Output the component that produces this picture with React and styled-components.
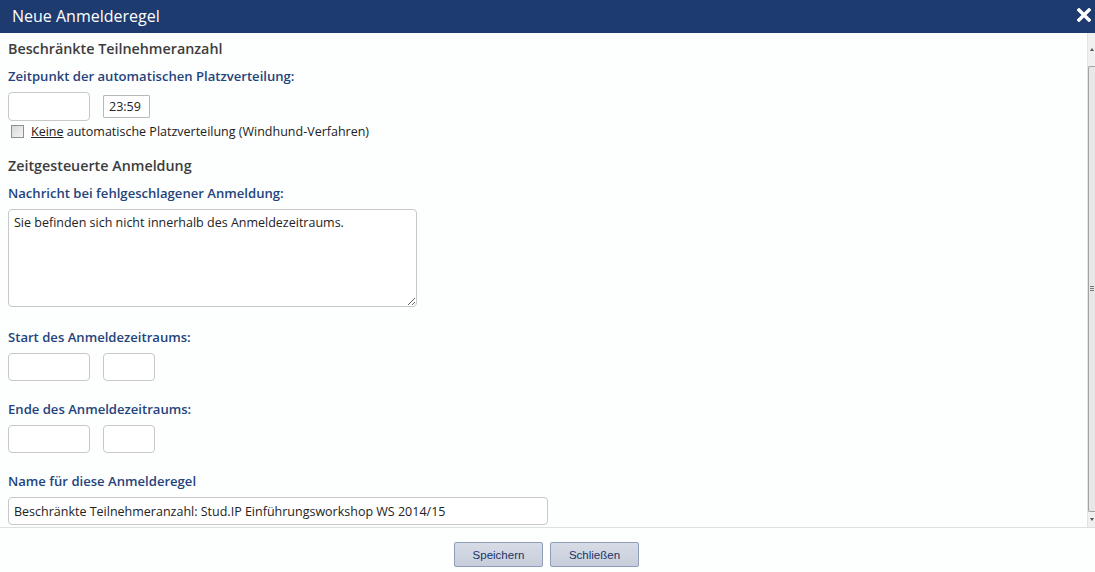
import React from "react";
import styled, { createGlobalStyle } from "styled-components";

const GlobalStyle = createGlobalStyle`
  html, body {
    margin: 0;
    padding: 0;
    background: #fdfefe;
  }
  body {
    font-family: "Open Sans", "Liberation Sans", sans-serif;
    color: #333;
  }
`;

const Dialog = styled.div`
  width: 1095px;
  height: 572px;
  display: flex;
  flex-direction: column;
  background: #fdfefe;
  overflow: hidden;
`;

const TitleBar = styled.div`
  height: 33px;
  flex: none;
  background: #1e3b6f;
  display: flex;
  align-items: center;
  justify-content: space-between;
  padding: 0 4px 0 12px;
`;

const Title = styled.span`
  color: #fff;
  font-size: 16px;
  line-height: 20px;
  margin-top: -2px;
`;

const CloseButton = styled.button`
  border: none;
  background: none;
  padding: 0;
  width: 14px;
  height: 14px;
  display: flex;
  margin-top: -4px;
  cursor: pointer;
`;

const Body = styled.div`
  flex: none;
  height: 494px;
  display: flex;
  border-bottom: 1px solid #dcdfe3;
`;

const Content = styled.div`
  flex: 1;
  padding: 6px 8px 0 8px;
  display: flex;
  flex-direction: column;
  align-items: flex-start;
`;

const Scrollbar = styled.div`
  width: 7px;
  flex: none;
  background: #f0f0f0;
  border-left: 1px solid #e2e2e2;
  display: flex;
  flex-direction: column;
  align-items: stretch;
`;

const Arrow = styled.div`
  height: ${p => (p.$down ? 15 : 33)}px;
  flex: none;
  display: flex;
  justify-content: center;
  align-items: center;
  &::before {
    content: "";
    width: 0;
    height: 0;
    border-left: 2px solid transparent;
    border-right: 2px solid transparent;
    ${p => (p.$down ? "border-top: 3px solid #555;" : "border-bottom: 3px solid #555;")}
  }
`;

const Thumb = styled.div`
  flex: 1;
  background: #e8e8e8;
  border-top: 1px solid #a3a3a3;
  border-left: 1px solid #a3a3a3;
  border-bottom: 1px solid #a3a3a3;
  border-radius: 2px 0 0 2px;
  display: flex;
  align-items: center;
  justify-content: center;
  &::after {
    content: "";
    width: 4px;
    height: 6px;
    background: repeating-linear-gradient(#777 0 1px, transparent 1px 2px);
  }
`;

const Heading = styled.h2`
  margin: ${p => p.$mt || 0}px 0 0;
  font-size: 14.3px;
  line-height: 20px;
  font-weight: 600;
  color: #3d3d3d;
`;

const Label = styled.label`
  display: block;
  margin-top: ${p => p.$mt || 0}px;
  font-size: 13.1px;
  line-height: 18px;
  font-weight: 600;
  color: #24447c;
`;

const Row = styled.div`
  display: flex;
  align-items: center;
  gap: 13px;
  margin-top: ${p => p.$mt || 0}px;
  height: ${p => p.$h || 28}px;
`;

const TextInput = styled.input`
  box-sizing: border-box;
  width: ${p => p.$w}px;
  height: ${p => p.$h || 28}px;
  border: 1px solid ${p => (p.$square ? "#b9b9b9" : "#c8c8c8")};
  border-radius: ${p => (p.$square ? "1px" : "4px")};
  background: #fff;
  padding: 0 5px;
  font-family: "Open Sans", "Liberation Sans", sans-serif;
  font-size: 12.5px;
  color: #222;
  outline: none;
`;

const CheckRow = styled.div`
  display: flex;
  align-items: center;
  height: 20px;
  padding-left: 3px;
  font-size: 12.5px;
  color: #222;
`;

const Check = styled.input`
  appearance: none;
  margin: 0 7px 0 0;
  width: 13px;
  height: 13px;
  box-sizing: border-box;
  border: 1px solid #8f8f8f;
  background: linear-gradient(135deg, #d8d8d8, #f4f4f4);
`;

const Access = styled.span`
  text-decoration: underline;
`;

const TextArea = styled.textarea`
  box-sizing: border-box;
  width: 409px;
  height: 98px;
  margin-top: 7px;
  border: 1px solid #c8c8c8;
  border-radius: 4px;
  background: #fff;
  padding: 4px 5px;
  font-family: "Open Sans", "Liberation Sans", sans-serif;
  font-size: 12.5px;
  line-height: 18px;
  color: #222;
  resize: both;
  outline: none;
`;

const ButtonPane = styled.div`
  flex: 1;
  display: flex;
  justify-content: center;
  align-items: flex-start;
  gap: 7px;
  padding-top: 14px;
  padding-right: 2px;
`;

const Button = styled.button`
  width: 89px;
  height: 25px;
  border: 1px solid #8d9cb7;
  border-radius: 2px;
  background: linear-gradient(#d7dce6, #c7cedb);
  color: #1a3466;
  font-family: "Liberation Sans", Arial, sans-serif;
  font-size: 11.5px;
  cursor: pointer;
`;

function CloseIcon() {
  return (
    <svg width="14" height="14" viewBox="0 0 14 14">
      <path d="M2 2 L12 12 M12 2 L2 12" stroke="#fff" strokeWidth="3.4" strokeLinecap="square" />
    </svg>
  );
}

export default function App() {
  return (
    <>
      <GlobalStyle />
      <Dialog>
        <TitleBar>
          <Title>Neue Anmelderegel</Title>
          <CloseButton aria-label="Schließen">
            <CloseIcon />
          </CloseButton>
        </TitleBar>
        <Body>
          <Content>
            <Heading>Beschränkte Teilnehmeranzahl</Heading>
            <Label $mt={8}>Zeitpunkt der automatischen Platzverteilung:</Label>
            <Row $mt={7} $h={29}>
              <TextInput $w={82} $h={29} />
              <TextInput $w={47} $h={23} $square defaultValue="23:59" />
            </Row>
            <CheckRow>
              <Check type="checkbox" />
              <span>
                <Access>Keine</Access> automatische Platzverteilung (Windhund-Verfahren)
              </span>
            </CheckRow>

            <Heading $mt={15}>Zeitgesteuerte Anmeldung</Heading>
            <Label $mt={8}>Nachricht bei fehlgeschlagener Anmeldung:</Label>
            <TextArea defaultValue="Sie befinden sich nicht innerhalb des Anmeldezeitraums." />

            <Label $mt={21}>Start des Anmeldezeitraums:</Label>
            <Row $mt={7}>
              <TextInput $w={82} />
              <TextInput $w={52} />
            </Row>

            <Label $mt={19}>Ende des Anmeldezeitraums:</Label>
            <Row $mt={7}>
              <TextInput $w={82} />
              <TextInput $w={52} />
            </Row>

            <Label $mt={19}>Name für diese Anmelderegel</Label>
            <Row $mt={7}>
              <TextInput
                $w={540}
                defaultValue="Beschränkte Teilnehmeranzahl: Stud.IP Einführungsworkshop WS 2014/15"
              />
            </Row>
          </Content>
          <Scrollbar>
            <Arrow />
            <Thumb />
            <Arrow $down />
          </Scrollbar>
        </Body>
        <ButtonPane>
          <Button>Speichern</Button>
          <Button>Schließen</Button>
        </ButtonPane>
      </Dialog>
    </>
  );
}
